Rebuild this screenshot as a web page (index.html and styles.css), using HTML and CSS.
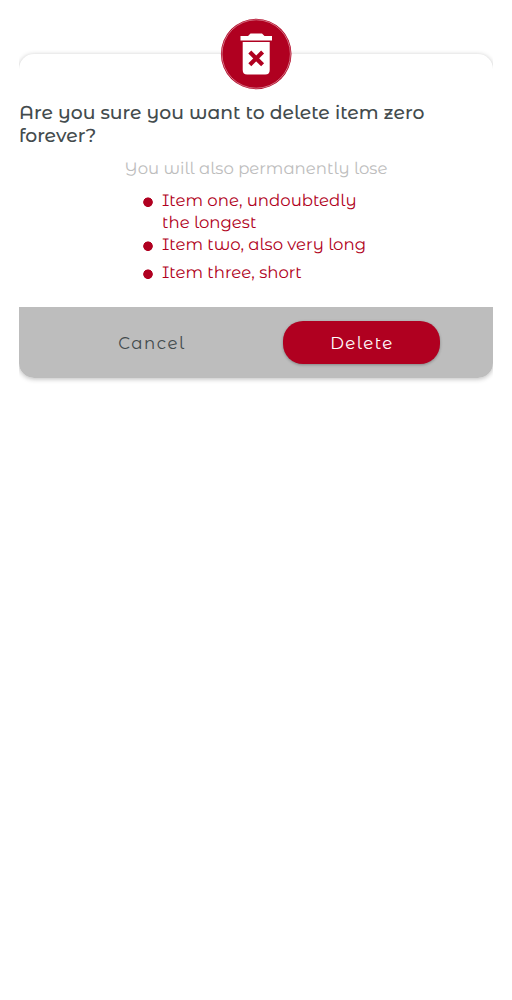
FILE: index.html
```html
<!DOCTYPE html>
<html lang="en">
<head>
<meta charset="utf-8">
<title>Delete item</title>
<link rel="stylesheet" href="styles.css">
</head>
<body>
<main class="dialog">
  <div class="badge">
    <svg width="72" height="72" viewBox="0 0 72 72" aria-hidden="true">
      <circle cx="36.200" cy="36" r="35.3" fill="#b00020"/>
      <circle cx="36.200" cy="36" r="34.2" fill="none" stroke="#fff" stroke-opacity=".55" stroke-width=".8"/>
      <path fill="#fff" d="M20.500 18H28L30.500 15.500H42L44.500 18H52V22.500H20.500ZM22.700 24H49.700V52Q49.700 56.500 45.200 56.500H27.200Q22.700 56.500 22.700 52Z"/>
      <path d="M29.800 34L42.600 46.800M42.600 34L29.800 46.800" stroke="#b00020" stroke-width="4.200"/>
    </svg>
  </div>
  <section class="card">
    <div class="content">
      <h1 class="title">Are you sure you want to delete item zero<br>forever?</h1>
      <p class="note">You will also permanently lose</p>
      <ul class="items">
        <li class="item item-one">Item one, undoubtedly<br>the longest</li>
        <li class="item item-two">Item two, also very long</li>
        <li class="item item-three">Item three, short</li>
      </ul>
    </div>
    <footer class="actions">
      <button class="button cancel">Cancel</button>
      <button class="button delete">Delete</button>
    </footer>
  </section>
</main>
</body>
</html>
```
FILE: styles.css
```css
* { box-sizing: border-box; }
body {
  margin: 0;
  background: #fff;
  font-family: "Montserrat Alternates", Montserrat, Lato, sans-serif;
  text-rendering: geometricPrecision;
}
.dialog { padding: 18px 19px; }
.badge {
  position: relative;
  z-index: 1;
  width: 72px;
  height: 72px;
  margin: 0 auto -36px;
}
.badge svg { display: block; }
.card {
  height: 324px;
  border-radius: 15px;
  background: #fff;
  box-shadow: 0 1px 5px rgba(0, 0, 0, .27);
  clip-path: inset(-10px 0);
  display: flex;
  flex-direction: column;
}
.content { height: 253px; padding-top: 47px; }
.title {
  margin: 0;
  font-size: 18.800px;
  font-weight: 500;
  line-height: 23px;
  color: #434b4d;
  white-space: nowrap;
}
.note {
  margin: 11px 0 10px;
  text-align: center;
  font-size: 16.550px;
  font-weight: 400;
  line-height: 22px;
  color: #bdbdbd;
  white-space: nowrap;
}
.items {
  margin: 0 0 0 124px;
  padding: 0;
  list-style: none;
  font-size: 16.550px;
  font-weight: 400;
  line-height: 22px;
  color: #b00020;
  white-space: nowrap;
}
.item {
  display: flow-root;
  padding-left: 19px;
  background: radial-gradient(circle at 5px 12.200px, #b00020 4.400px, transparent 5.100px);
}
.item-three { margin-top: 6px; }
.actions {
  height: 71px;
  padding: 14px 53px 0 54px;
  display: flex;
  justify-content: space-between;
  border-radius: 0 0 15px 15px;
  background: #bdbdbd;
}
.button {
  width: 157px;
  height: 43px;
  padding: 0 0 0 1px;
  border: 0;
  border-radius: 20px;
  font-family: inherit;
  font-size: 16.600px;
  font-weight: 400;
  letter-spacing: 1.480px;
}
.cancel { background: transparent; color: #434b4d; }
.delete {
  background: #b00020;
  color: #fff;
  box-shadow: 0 1px 3px rgba(0, 0, 0, .3);
}
```
